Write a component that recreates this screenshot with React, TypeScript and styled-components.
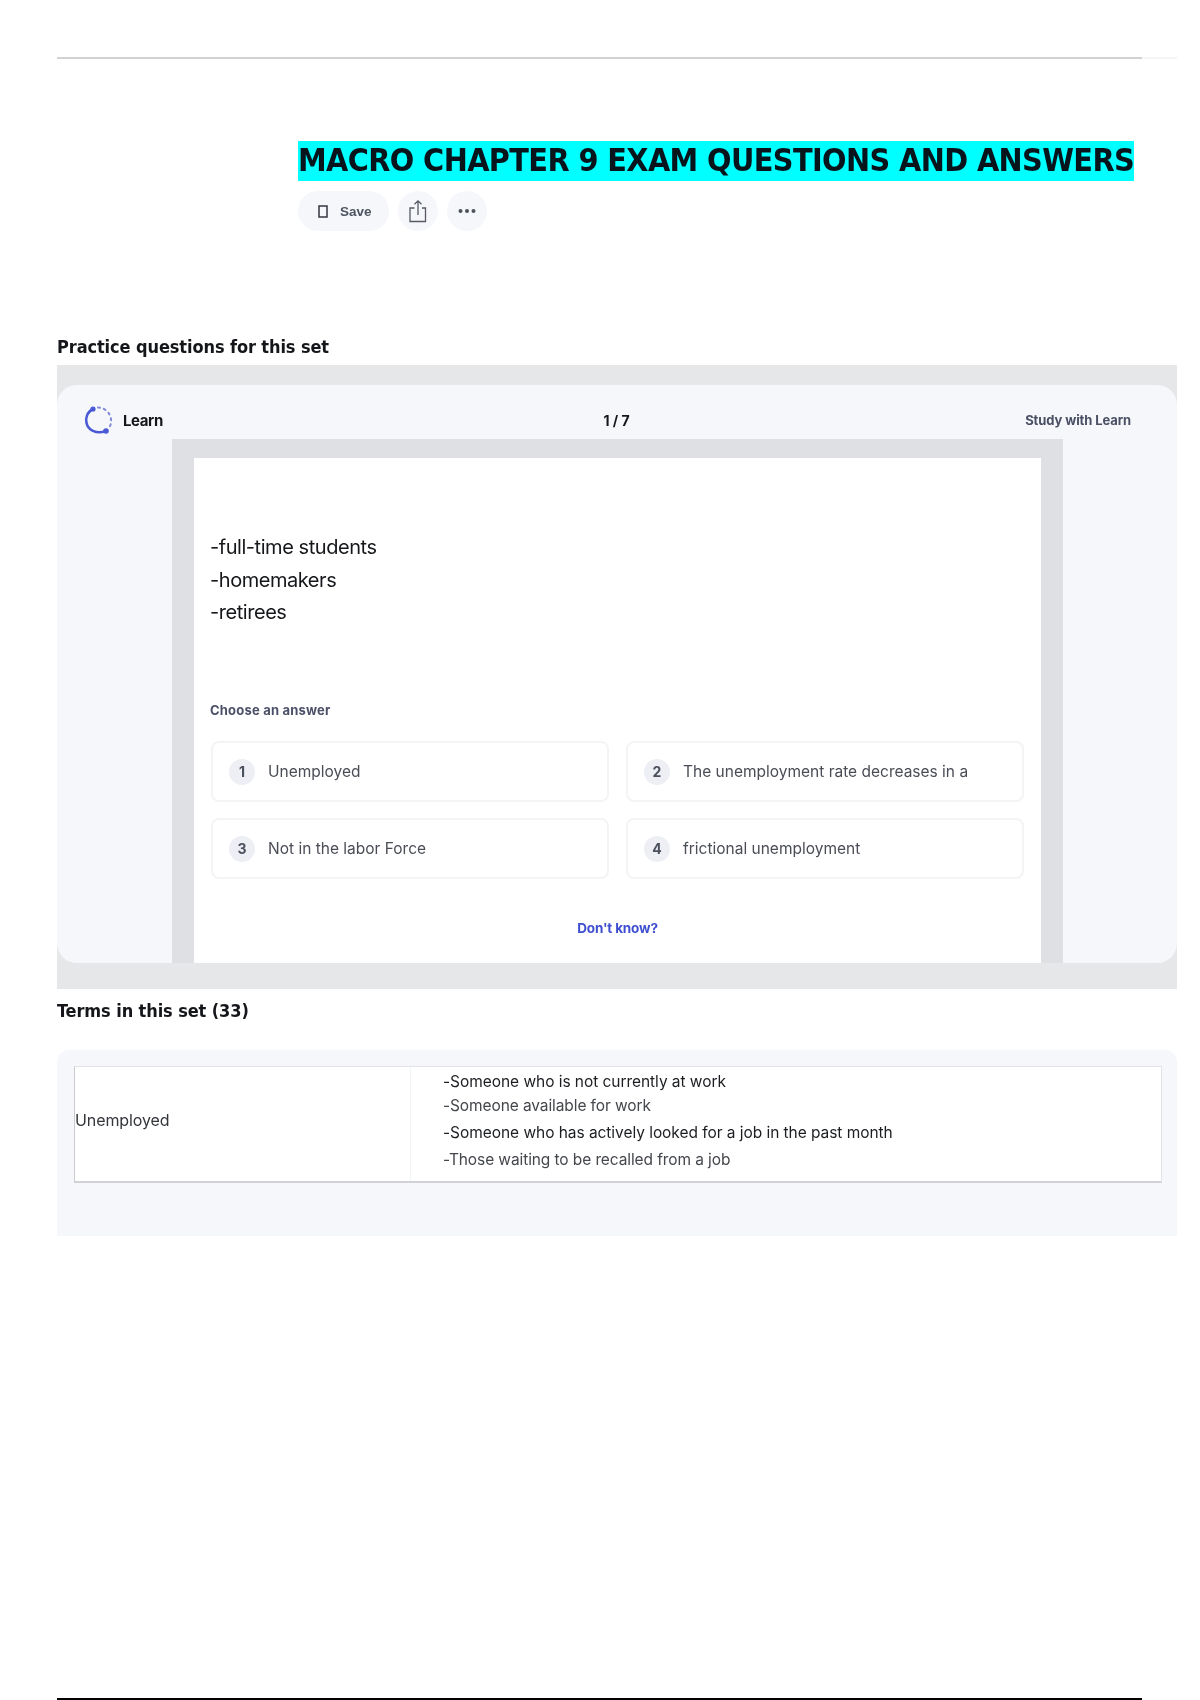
import React from "react"
import styled, { createGlobalStyle } from "styled-components"

const GlobalStyle = createGlobalStyle`
  html, body {
    margin: 0;
    padding: 0;
    background: #fff;
    font-family: "DejaVu Sans", sans-serif;
  }
`

const Page = styled.div`
  width: 1200px;
  height: 1700px;
  box-sizing: border-box;
  padding: 57px 23px 0 57px;
  display: flex;
  flex-direction: column;
  filter: blur(0.4px);
`

const TopRule = styled.div`
  height: 2px;
  background: linear-gradient(to right, #d2d2d2 0, #d2d2d2 1085px, #f5f5f5 1085px);
`

const Header = styled.header`
  margin: 82px 0 0 241px;
`

const Title = styled.h1`
  margin: 0;
  width: 836px;
  height: 40px;
  background: #00ffff;
  color: #08141c;
  font: 700 32px/39px "DejaVu Sans", sans-serif;
  font-stretch: condensed;
  letter-spacing: -0.6px;
  white-space: nowrap;
`

const Actions = styled.div`
  display: flex;
  gap: 9px;
  margin-top: 10px;
`

const SaveButton = styled.button`
  width: 91px;
  height: 40px;
  border: 0;
  border-radius: 20px;
  background: #f6f7fb;
  color: #4d5561;
  padding: 0 0 0 20px;
  display: flex;
  align-items: center;
  gap: 12px;
  font: 700 13.5px "Liberation Sans", sans-serif;
`

const RoundButton = styled.button`
  width: 40px;
  height: 40px;
  border: 0;
  border-radius: 50%;
  background: #f6f7fb;
  padding: 0;
  display: flex;
  align-items: center;
  justify-content: center;
`

const SectionHeading = styled.h2<{ $top: number }>`
  margin: ${(p) => p.$top}px 0 0;
  color: #14161a;
  font: 700 18px/24px "DejaVu Sans", sans-serif;
  font-stretch: condensed;
  letter-spacing: -0.1px;
`

const GreyFrame = styled.section`
  margin-top: 6px;
  height: 624px;
  box-sizing: border-box;
  padding: 20px 0 26px;
  background: #e6e7e9;
`

const LearnCard = styled.div`
  height: 100%;
  border-radius: 20px;
  background: #f5f7fb;
  display: flex;
  flex-direction: column;
  overflow: hidden;
`

const CardBar = styled.div`
  height: 54px;
  flex: none;
  box-sizing: border-box;
  padding: 16px 46px 0 27px;
  display: grid;
  grid-template-columns: 1fr auto 1fr;
  align-items: center;
`

const LearnBrand = styled.div`
  display: flex;
  align-items: center;
  gap: 9px;
  color: #14161a;
  font: 700 15px "Inter", sans-serif;
  letter-spacing: -0.4px;
`

const Counter = styled.div`
  color: #14161a;
  font: 700 14px "Inter", sans-serif;
  margin-left: 18px;
`

const StudyLink = styled.div`
  justify-self: end;
  color: #4a4f63;
  font: 700 13px "Inter", sans-serif;
  letter-spacing: -0.1px;
`

const QuestionFrame = styled.div`
  flex: 1;
  margin: 0 114px 0 115px;
  padding: 19px 22px 0 22px;
  background: #dfe0e3;
  display: flex;
`

const QuestionSheet = styled.div`
  flex: 1;
  box-sizing: border-box;
  background: #fff;
  padding: 73px 16px 0 16px;
`

const PromptLine = styled.div`
  color: #15171a;
  font: 400 20px/32.5px "Inter", sans-serif;
  letter-spacing: -0.45px;
`

const ChooseLabel = styled.div`
  margin-top: 71px;
  color: #4b5068;
  font: 700 13px/20px "Inter", sans-serif;
  letter-spacing: 0.2px;
`

const OptionGrid = styled.div`
  margin: 21px 0 0 1px;
  display: grid;
  grid-template-columns: 398px 398px;
  grid-auto-rows: 61px;
  column-gap: 17px;
  row-gap: 16px;
`

const OptionCard = styled.div`
  box-sizing: border-box;
  border: 2px solid #f3f4f6;
  border-radius: 8px;
  background: #fff;
  padding: 1px 16px 0;
  display: flex;
  align-items: center;
  gap: 13px;
  color: #4a4d55;
  font: 400 15.5px "Inter", sans-serif;
`

const OptionNumber = styled.span`
  width: 26px;
  height: 26px;
  flex: none;
  border-radius: 50%;
  background: #edeff4;
  color: #4a4f5c;
  font: 700 14px/26px "Inter", sans-serif;
  text-align: center;
`

const DontKnow = styled.div`
  margin-top: 39px;
  color: #3f4fd0;
  font: 700 13.5px/20px "Inter", sans-serif;
  letter-spacing: -0.15px;
  text-align: center;
`

const TermsPanel = styled.section`
  margin-top: 27px;
  height: 186px;
  box-sizing: border-box;
  padding: 16px 15px 0 17px;
  border-radius: 12px 12px 0 0;
  background: #f5f7fa;
`

const TermRow = styled.div`
  height: 117px;
  box-sizing: border-box;
  border: 1px solid #e2e3e5;
  border-bottom: 2px solid #cfd1d4;
  border-left-color: #c9cbce;
  background: #fff;
  display: grid;
  grid-template-columns: 335px 1fr;
`

const TermWord = styled.div`
  display: flex;
  align-items: center;
  padding-bottom: 8px;
  color: #33363a;
  font: 400 16px "Inter", sans-serif;
  letter-spacing: -0.1px;
`

const TermDefinition = styled.div`
  border-left: 1px solid #f3f4f5;
  padding: 2px 0 0 32px;
`

const DefinitionLine = styled.div<{ $height: number; $soft?: boolean }>`
  height: ${(p) => p.$height}px;
  line-height: ${(p) => p.$height}px;
  color: ${(p) => (p.$soft ? "#44474c" : "#1c1e22")};
  font-family: "Inter", sans-serif;
  font-size: 15.5px;
  letter-spacing: ${(p) => (p.$soft ? "-0.1px" : "-0.05px")};
`

const BottomRule = styled.div`
  margin-top: auto;
  width: 1085px;
  height: 2px;
  background: #000;
`

const LearnIcon = () => (
  <svg width="30" height="32" viewBox="0 0 30 32" fill="none">
    <path d="M9 5 C3 8 1.5 14 2.5 19 C4 26 12 30 21 27.5" stroke="#4a5ad6" strokeWidth="2.6" strokeLinecap="round" />
    <circle cx="9" cy="5" r="2.6" fill="#4a5ad6" />
    <circle cx="22" cy="27" r="2.8" fill="#4a5ad6" />
    <path d="M14 3.5 C20 3.5 26 8 27 15 C27.4 18 26.8 21 25.5 23" stroke="#8189d8" strokeWidth="2" strokeDasharray="2 4" strokeLinecap="round" />
  </svg>
)

const BookmarkIcon = () => (
  <svg width="10" height="13" viewBox="0 0 10 13" fill="none">
    <rect x="1" y="1" width="8" height="11" stroke="#33373f" strokeWidth="1.5" />
  </svg>
)

const ShareIcon = () => (
  <svg width="20" height="24" viewBox="0 0 20 24" fill="none" stroke="#555a63" strokeWidth="1.3">
    <path d="M6.5 9 H2 V22.5 H17.5 V9 H14" />
    <path d="M10 16 V2 M6.5 5.2 L10 1.8 L13.5 5.2" />
  </svg>
)

const MoreIcon = () => (
  <svg width="20" height="6" viewBox="0 0 20 6" fill="#4d525c">
    <circle cx="3.5" cy="3" r="2" />
    <circle cx="10" cy="3" r="2" />
    <circle cx="16.5" cy="3" r="2" />
  </svg>
)

const options = [
  "Unemployed",
  "The unemployment rate decreases in a",
  "Not in the labor Force",
  "frictional unemployment",
]

const definition = [
  { text: "-Someone who is not currently at work", height: 25 },
  { text: "-Someone available for work", height: 24, soft: true },
  { text: "-Someone who has actively looked for a job in the past month", height: 29 },
  { text: "-Those waiting to be recalled from a job", height: 25, soft: true },
]

export default function App() {
  return (
    <Page>
      <GlobalStyle />
      <TopRule />
      <Header>
        <Title>MACRO CHAPTER 9 EXAM QUESTIONS AND ANSWERS</Title>
        <Actions>
          <SaveButton>
            <BookmarkIcon />
            Save
          </SaveButton>
          <RoundButton>
            <ShareIcon />
          </RoundButton>
          <RoundButton>
            <MoreIcon />
          </RoundButton>
        </Actions>
      </Header>

      <SectionHeading $top={104}>Practice questions for this set</SectionHeading>
      <GreyFrame>
        <LearnCard>
          <CardBar>
            <LearnBrand>
              <LearnIcon />
              Learn
            </LearnBrand>
            <Counter>1 / 7</Counter>
            <StudyLink>Study with Learn</StudyLink>
          </CardBar>
          <QuestionFrame>
            <QuestionSheet>
              <PromptLine>-full-time students</PromptLine>
              <PromptLine>-homemakers</PromptLine>
              <PromptLine>-retirees</PromptLine>
              <ChooseLabel>Choose an answer</ChooseLabel>
              <OptionGrid>
                {options.map((option, i) => (
                  <OptionCard key={option}>
                    <OptionNumber>{i + 1}</OptionNumber>
                    {option}
                  </OptionCard>
                ))}
              </OptionGrid>
              <DontKnow>Don't know?</DontKnow>
            </QuestionSheet>
          </QuestionFrame>
        </LearnCard>
      </GreyFrame>

      <SectionHeading $top={10}>Terms in this set (33)</SectionHeading>
      <TermsPanel>
        <TermRow>
          <TermWord>Unemployed</TermWord>
          <TermDefinition>
            {definition.map((line) => (
              <DefinitionLine key={line.text} $height={line.height} $soft={line.soft}>
                {line.text}
              </DefinitionLine>
            ))}
          </TermDefinition>
        </TermRow>
      </TermsPanel>
      <BottomRule />
    </Page>
  )
}
